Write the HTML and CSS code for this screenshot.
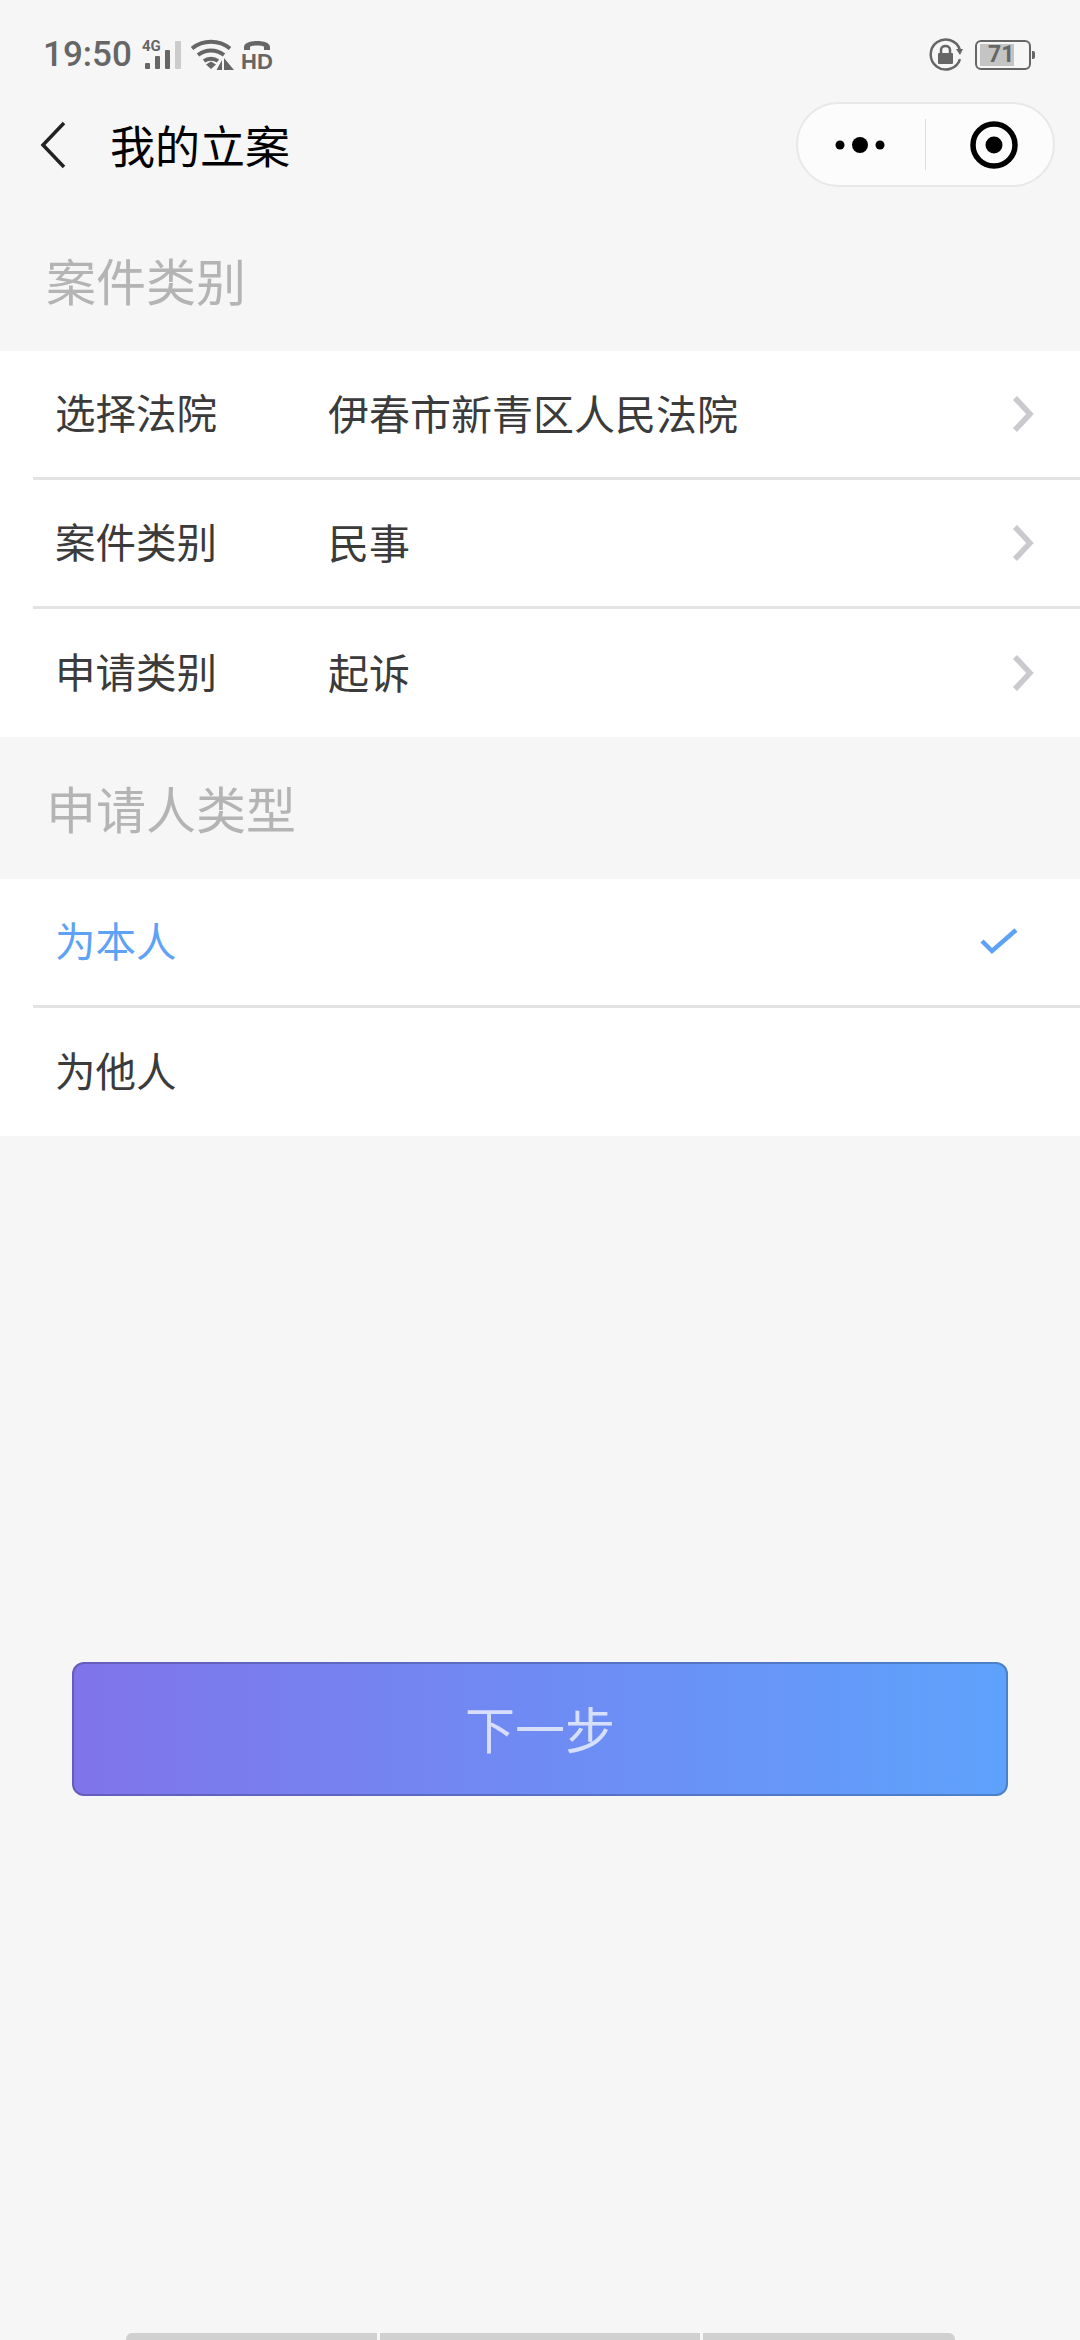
FILE: index.html
```html
<!DOCTYPE html>
<html lang="zh-CN">
<head>
  <meta charset="UTF-8" />
  <meta name="viewport" content="width=device-width, initial-scale=1" />
  <title>我的立案</title>
  <link rel="stylesheet" href="styles.css">
</head>
<body>
  <div class="page">

    <!-- Status bar -->
    <div class="status-bar">
      <div class="status-left">
        <span class="time">19:50</span>
        <svg class="icon-signal" width="40" height="36" viewBox="0 -2 40 36">
          <text x="0" y="12" class="small-label">4G</text>
          <rect x="3" y="24" width="5" height="6" rx="1" fill="#666"/>
          <rect x="13" y="17" width="5" height="13" rx="1" fill="#666"/>
          <rect x="23" y="11" width="5" height="19" rx="1" fill="#666"/>
          <rect x="33" y="2" width="6" height="28" rx="1" fill="#ccc"/>
        </svg>
        <svg class="icon-wifi" width="44" height="32" viewBox="0 0 44 32">
          <path d="M1 9.500C12 .5 28 .5 39 9.500" fill="none" stroke="#666" stroke-width="4"/>
          <path d="M7 16C15 10 25 10 33 16" fill="none" stroke="#666" stroke-width="4"/>
          <path d="M13 22C17 19 23 19 27 22" fill="none" stroke="#666" stroke-width="4"/>
          <path d="M15 25.500L20 22.500 25 25.500 20 30Z" fill="#666"/>
          <path d="M31 21V31H25.500ZM33 19V31H43Z" fill="#666"/>
        </svg>
        <svg class="icon-hd" width="34" height="40" viewBox="0 -4 34 40">
          <path d="M3 11V8C3 4 9 2 16 2S29 4 29 8V11H23V8C23 7 19 6.500 16 6.500S9 7 9 8V11Z" fill="#666"/>
          <text x="0" y="30" class="hd-label">HD</text>
        </svg>
      </div>
      <div class="status-right">
        <svg class="icon-lock" width="34" height="34" viewBox="0 0 34 34">
          <path d="M31 21A15 15 0 1 1 31 12" fill="none" stroke="#666" stroke-width="2.500"/>
          <path d="M27 11H34L31 17Z" fill="#666"/>
          <rect x="9" y="15" width="15" height="11" rx="1" fill="#666"/>
          <path d="M12 15V12C12 6.500 21 6.500 21 12V15" fill="none" stroke="#666" stroke-width="2.500"/>
        </svg>
        <div class="battery">
          <div class="battery-body">
            <div class="battery-fill"></div>
            <span class="battery-num">71</span>
          </div>
          <div class="battery-nub"></div>
        </div>
      </div>
    </div>

    <!-- Nav bar -->
    <div class="nav-bar">
      <div class="nav-left">
        <svg class="icon-back" width="26" height="48" viewBox="0 0 26 48">
          <path d="M24 2L3 24 24 46" fill="none" stroke="#222" stroke-width="3.500"/>
        </svg>
        <span class="nav-title">我的立案</span>
      </div>
      <div class="capsule">
        <div class="capsule-side more">
          <svg width="50" height="20" viewBox="0 0 50 20">
            <circle cx="5" cy="10" r="4.500"/>
            <circle cx="25" cy="10" r="8"/>
            <circle cx="45" cy="10" r="4.500"/>
          </svg>
        </div>
        <div class="capsule-line"></div>
        <div class="capsule-side target">
          <svg width="50" height="50" viewBox="0 0 50 50">
            <circle cx="25" cy="25" r="21" fill="none" stroke="#000" stroke-width="5.500"/>
            <circle cx="25" cy="25" r="8.500"/>
          </svg>
        </div>
      </div>
    </div>

    <div class="section-head first">案件类别</div>
    <div class="group">
      <div class="row">
        <span class="row-label">选择法院</span>
        <span class="row-value">伊春市新青区人民法院</span>
        <svg class="arrow" width="22" height="38" viewBox="0 0 22 38">
          <path d="M3 3L18 19 3 35" fill="none" stroke="#c9c9ce" stroke-width="5.500"/>
        </svg>
      </div>
      <div class="row">
        <span class="row-label">案件类别</span>
        <span class="row-value">民事</span>
        <svg class="arrow" width="22" height="38" viewBox="0 0 22 38">
          <path d="M3 3L18 19 3 35" fill="none" stroke="#c9c9ce" stroke-width="5.500"/>
        </svg>
      </div>
      <div class="row">
        <span class="row-label">申请类别</span>
        <span class="row-value">起诉</span>
        <svg class="arrow" width="22" height="38" viewBox="0 0 22 38">
          <path d="M3 3L18 19 3 35" fill="none" stroke="#c9c9ce" stroke-width="5.500"/>
        </svg>
      </div>
    </div>

    <div class="section-head second">申请人类型</div>
    <div class="group">
      <div class="row selected">
        <span>为本人</span>
        <svg class="check" width="38" height="28" viewBox="0 0 38 28">
          <path d="M2 13L12 23 36 2" fill="none" stroke="#5ea2f5" stroke-width="4.500"/>
        </svg>
      </div>
      <div class="row">
        <span>为他人</span>
      </div>
    </div>

    <div class="btn-wrap">
      <div class="next-btn">下一步</div>
    </div>

    <div class="home-bars">
      <div class="home-bar a"></div>
      <div class="home-bar b"></div>
      <div class="home-bar c"></div>
    </div>

  </div>
</body>
</html>
```

FILE: styles.css
```css
* {
  box-sizing: border-box;
}
body {
  margin: 0;
  background: #f6f6f6;
  font-family: "Noto Sans CJK SC", "Noto Sans", sans-serif;
}
.page {
  width: 1080px;
  height: 2340px;
  display: flex;
  flex-direction: column;
  overflow: hidden;
}

/* status bar */
.status-bar {
  height: 102px;
  padding: 8px 45px 0 43px;
  display: flex;
  justify-content: space-between;
  align-items: center;
}
.status-left, .status-right {
  display: flex;
  align-items: center;
}
.time {
  font-family: Roboto, sans-serif;
  font-weight: 500;
  font-size: 35px;
  line-height: 34px;
  color: #666;
  margin-right: 10px;
}
.icon-wifi {
  margin-left: 9px;
}
.icon-hd {
  margin-left: 6px;
}
.small-label {
  font-family: Roboto, sans-serif;
  font-weight: 700;
  font-size: 15px;
  fill: #666;
}
.hd-label {
  font-family: "Liberation Sans", sans-serif;
  font-weight: 700;
  font-size: 22px;
  fill: #666;
}
.battery {
  margin-left: 12px;
  display: flex;
  align-items: center;
}
.battery-body {
  width: 56px;
  height: 30px;
  border: 2px solid #666;
  border-radius: 6px;
  position: relative;
}
.battery-fill {
  position: absolute;
  left: 3px;
  top: 2px;
  bottom: 2px;
  width: 34px;
  background: #c4c4c4;
}
.battery-num {
  position: absolute;
  left: 11px;
  top: 0;
  font-family: Roboto, sans-serif;
  font-weight: 700;
  font-size: 23px;
  line-height: 26px;
  color: #666;
}
.battery-nub {
  width: 3px;
  height: 8px;
  margin-left: 1px;
  background: #666;
  border-radius: 0 2px 2px 0;
}

/* nav bar */
.nav-bar {
  height: 85px;
  padding: 0 25px 0 40px;
  display: flex;
  justify-content: space-between;
  align-items: center;
}
.nav-left {
  display: flex;
  align-items: center;
}
.nav-title {
  margin-left: 44px;
  font-size: 45px;
  line-height: 60px;
  color: #000;
}
.capsule {
  width: 259px;
  height: 85px;
  background: #fcfcfc;
  border: 2px solid #e8e8e8;
  border-radius: 43px;
  display: flex;
  align-items: center;
}
.capsule-side {
  width: 127px;
  display: flex;
  justify-content: center;
  align-items: center;
}
.capsule-side.more {
  padding-right: 3px;
}
.capsule-side.target {
  padding-left: 8px;
}
.capsule-line {
  width: 1px;
  height: 51px;
  background: #ddd;
}

/* sections */
.section-head {
  height: 142px;
  display: flex;
  align-items: center;
  font-size: 50px;
  color: #b4b4b4;
}
.section-head.first {
  height: 164px;
  padding: 20px 0 0 46px;
}
.section-head.second {
  padding: 0 0 3px 46px;
}
.group {
  background: #fff;
}
.row {
  height: 129px;
  margin-left: 33px;
  padding: 0 46px 5px 22px;
  border-bottom: 3px solid #e3e3e3;
  display: flex;
  align-items: center;
  font-size: 40.5px;
  color: #3b3b3b;
}
.row:last-child {
  border-bottom: none;
  height: 128px;
}
.row-label {
  width: 273px;
}
.row-value {
  flex: 1;
  font-size: 41px;
}
.arrow, .check {
  margin-top: 5px;
}
.selected {
  color: #5ea2f5;
  justify-content: space-between;
  padding-right: 62px;
}

/* next button */
.btn-wrap {
  flex: 1;
  padding: 526px 72px 0;
}
.next-btn {
  height: 134px;
  padding-bottom: 4px;
  border: 2px solid rgba(0, 0, 0, 0.2);
  border-radius: 12px;
  background: linear-gradient(90deg, #8074ea, #5ea2fc) border-box;
  display: flex;
  justify-content: center;
  align-items: center;
  font-size: 50px;
  color: rgba(255, 255, 255, 0.72);
}

/* gesture bars at the very bottom */
.home-bars {
  height: 7px;
  padding-left: 126px;
  display: flex;
  gap: 3px;
}
.home-bar {
  background: #d0d0d0;
}
.home-bar.a {
  width: 251px;
  border-radius: 6px 0 0 0;
}
.home-bar.b {
  width: 320px;
}
.home-bar.c {
  width: 252px;
  border-radius: 0 6px 0 0;
}
```
